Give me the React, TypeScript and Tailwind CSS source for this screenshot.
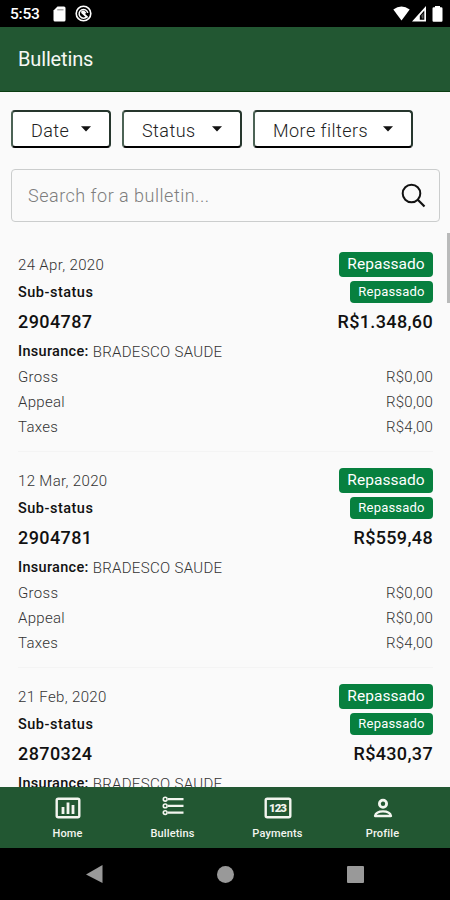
import { ReactNode } from "react"

const filters = [
  { label: "Date", width: "w-[100px]" },
  { label: "Status", width: "w-[120px]" },
  { label: "More filters", width: "w-[160px]" },
]

const bulletins = [
  {
    id: "2904787",
    date: "24 Apr, 2020",
    total: "R$1.348,60",
    charges: [
      { label: "Gross", value: "R$0,00" },
      { label: "Appeal", value: "R$0,00" },
      { label: "Taxes", value: "R$4,00" },
    ],
  },
  {
    id: "2904781",
    date: "12 Mar, 2020",
    total: "R$559,48",
    charges: [
      { label: "Gross", value: "R$0,00" },
      { label: "Appeal", value: "R$0,00" },
      { label: "Taxes", value: "R$4,00" },
    ],
  },
  { id: "2870324", date: "21 Feb, 2020", total: "R$430,37", charges: [] },
]

function StatusBar() {
  return (
    <div className="flex h-[27px] shrink-0 items-center bg-black pr-[7px] pl-[10px] text-white">
      <span className="w-[43px] pt-[2px] text-[15.5px] font-medium tracking-[-0.2px]">5:53</span>
      <svg width="13" height="16" viewBox="0 0 13 16" fill="currentColor">
        <path d="M4.5 .5H11Q12.5 .5 12.5 2V14Q12.5 15.5 11 15.5H2Q.5 15.5 .5 14V4.5Z" />
        <path d="M4.2 3.8H10.5" stroke="#999" strokeWidth="1.2" />
      </svg>
      <svg className="ml-[8.5px]" width="17" height="17" viewBox="0 0 17 17" fill="none" stroke="currentColor">
        <circle cx="8.5" cy="8.5" r="7.3" strokeWidth="1.6" />
        <path d="M12 11.5A4.4 4.4 0 1 1 12.8 7.8" strokeWidth="1.5" />
        <path d="M6.5 7L12.5 12.5M6.5 7Q9 5.5 10.5 8.5" strokeWidth="1.8" />
      </svg>
      <svg className="ml-auto" width="17" height="15" viewBox="0 0 17 15" fill="currentColor">
        <path d="M.3 3.4Q8.5 -2.5 16.7 3.4L8.5 14.5Z" />
      </svg>
      <svg className="ml-[2px]" width="14" height="16" viewBox="0 0 14 16" fill="currentColor">
        <path fillRule="evenodd" d="M14 0V15.5H0ZM12.3 4.5L7.8 9.8V13.8H12.3Z" />
        <path d="M9.3 9.5L11.5 7V12.5H10Z" opacity=".35" />
      </svg>
      <svg className="ml-[6px]" width="11" height="16" viewBox="0 0 11 16" fill="currentColor">
        <path d="M3 0H8V1.2H9.2Q10.5 1.2 10.5 2.5V14.5Q10.5 15.7 9.5 15.7H1.5Q.5 15.7 .5 14.5V2.5Q.5 1.2 1.8 1.2H3Z" />
      </svg>
    </div>
  )
}

function Bulletin({ bulletin }: { bulletin: (typeof bulletins)[number] }) {
  return (
    <article className="shrink-0 pr-[17px] pb-4 pl-[18px]">
      <div className="flex h-[25px] items-center justify-between">
        <span className="pt-[2px] text-[15px] font-light tracking-[0.35px] text-[#333]">{bulletin.date}</span>
        <span className="flex h-[25px] w-[94px] items-center justify-center rounded-[4px] bg-[#07803f] pt-px text-[15.5px] tracking-[0.05px] text-white">
          Repassado
        </span>
      </div>
      <div className="mt-1 flex h-[22px] items-center justify-between">
        <span className="pt-px text-[14.5px] font-medium tracking-[0.5px] text-[#111]">Sub-status</span>
        <span className="flex h-[22px] w-[83px] items-center justify-center rounded-[4px] bg-[#07803f] text-[13px] tracking-[0.2px] text-white">
          Repassado
        </span>
      </div>
      <div className="mt-[6px] flex h-6 items-center justify-between text-[18px] font-medium text-[#111]">
        <span className="tracking-[0.4px]">{bulletin.id}</span>
        <span className="tracking-[0.35px]">{bulletin.total}</span>
      </div>
      <div className="mt-[9px] mb-[2px] flex h-5 items-center">
        <span className="text-[14.5px] font-medium tracking-[0.3px] text-[#111]">Insurance:</span>
        <span className="ml-1 text-[15px] font-light tracking-[0.32px] text-[#333]">BRADESCO SAUDE</span>
      </div>
      {bulletin.charges.map((charge) => (
        <div
          key={charge.label}
          className="flex h-[25px] items-center justify-between pt-px text-[15px] font-light text-[#333]"
        >
          <span className="tracking-[0.3px]">{charge.label}</span>
          <span className="tracking-[0.2px]">{charge.value}</span>
        </div>
      ))}
      <div className="mt-[12px] h-px bg-[#f4f4f4]" />
    </article>
  )
}

function NavItem({ label, children }: { label: string; children: ReactNode }) {
  return (
    <div className="flex w-[105px] flex-col items-center text-[#f3f5ef]">
      <div className="flex h-[39px] items-center">{children}</div>
      <span className="text-[11px] leading-[14px] font-medium tracking-[0.15px]">{label}</span>
    </div>
  )
}

export default function App() {
  return (
    <div className="flex h-[900px] w-[450px] flex-col overflow-hidden bg-[#fafafa] font-[Roboto,sans-serif]">
      <StatusBar />
      <header className="flex h-[65px] shrink-0 items-center border-b border-[#0b3d12] bg-[#225732] pl-[18px]">
        <h1 className="text-[20px] tracking-[-0.15px] text-[#f6f8f4]">Bulletins</h1>
      </header>

      <main className="relative flex min-h-0 flex-1 flex-col overflow-hidden pt-[18px]">
        <div className="flex h-[38px] shrink-0 gap-[11px] pl-[11px]">
          {filters.map((filter) => (
            <button
              key={filter.label}
              className={`flex items-center justify-between rounded-[4px] border-2 border-t-[#26362d] border-r-[#26362d] border-b-black border-l-[#4c6355] bg-white pr-[18px] pl-[18px] ${filter.width}`}
            >
              <span className="pt-[2px] text-[18px] font-light tracking-[0.45px] whitespace-nowrap text-[#222]">
                {filter.label}
              </span>
              <svg width="10" height="6" viewBox="0 0 10 6" fill="#111">
                <path d="M0 .3H10L5 5.5Z" />
              </svg>
            </button>
          ))}
        </div>

        <div className="mt-[21px] mr-[10px] ml-[11px] flex h-[53px] shrink-0 items-center justify-between rounded-[4px] border border-[#cbcdcd] pr-[13px] pl-4">
          <span className="text-[18px] font-light tracking-[0.5px] text-[#7d7d7d]">Search for a bulletin...</span>
          <svg width="25" height="25" viewBox="0 0 25 25" fill="none" stroke="#111" strokeWidth="2">
            <circle cx="10.5" cy="10.5" r="8.8" />
            <path d="M16.8 16.8L23.5 23.5" strokeWidth="2.2" />
          </svg>
        </div>

        <section className="mt-[30px] flex flex-col">
          {bulletins.map((bulletin) => (
            <Bulletin key={bulletin.id} bulletin={bulletin} />
          ))}
        </section>
        <div className="absolute top-[141px] right-0 h-[70px] w-[3.5px] bg-[#b9baba]" />
      </main>

      <nav className="flex h-[61px] shrink-0 bg-[#225732] pt-[1px] pl-[15px]">
        <NavItem label="Home">
          <svg className="mt-px" width="26" height="22" viewBox="0 0 26 22" fill="none" stroke="currentColor" strokeWidth="2.4">
            <rect x="1.7" y="1.7" width="22.6" height="18.6" rx="1.5" />
            <path d="M8 17V10M13 17V5.5M18 17V8" strokeWidth="2.8" />
          </svg>
        </NavItem>
        <NavItem label="Bulletins">
          <svg className="mb-[3px]" width="22" height="20" viewBox="0 0 22 20" fill="none" stroke="currentColor" strokeWidth="1.6">
            <circle cx="3.2" cy="3.2" r="1.9" />
            <circle cx="3.2" cy="9.9" r="1.9" />
            <circle cx="3.2" cy="16.6" r="1.9" />
            <path d="M6 3.2H21.5M6 9.9H21.5M6 16.6H21.5" strokeWidth="2.2" />
          </svg>
        </NavItem>
        <NavItem label="Payments">
          <svg className="mt-px" width="28" height="22" viewBox="0 0 28 22" fill="none" stroke="currentColor" strokeWidth="2.4">
            <rect x="1.7" y="1.7" width="24.6" height="18.6" rx="1.5" />
            <text
              x="14"
              y="15"
              textAnchor="middle"
              textLength="18"
              fill="currentColor"
              stroke="none"
              className="text-[11.5px] font-black"
            >
              123
            </text>
          </svg>
        </NavItem>
        <NavItem label="Profile">
          <svg className="mt-px" width="20" height="20" viewBox="0 0 20 20" fill="none" stroke="currentColor">
            <circle cx="10" cy="5.8" r="3.6" strokeWidth="2.8" />
            <path d="M2 18Q3 13.4 10 13.4T18 18Z" strokeWidth="2.3" strokeLinejoin="round" />
          </svg>
        </NavItem>
      </nav>

      <div className="flex h-[52px] shrink-0 items-center bg-black pl-[86px] text-[#999]">
        <svg width="17" height="18" viewBox="0 0 17 18" fill="currentColor">
          <path d="M16.5 0V18L0 9.5Z" />
        </svg>
        <div className="ml-[114px] h-[17px] w-[17px] rounded-full bg-[#999]" />
        <div className="ml-[113px] h-[17px] w-[17px] rounded-[1px] bg-[#999]" />
      </div>
    </div>
  )
}
